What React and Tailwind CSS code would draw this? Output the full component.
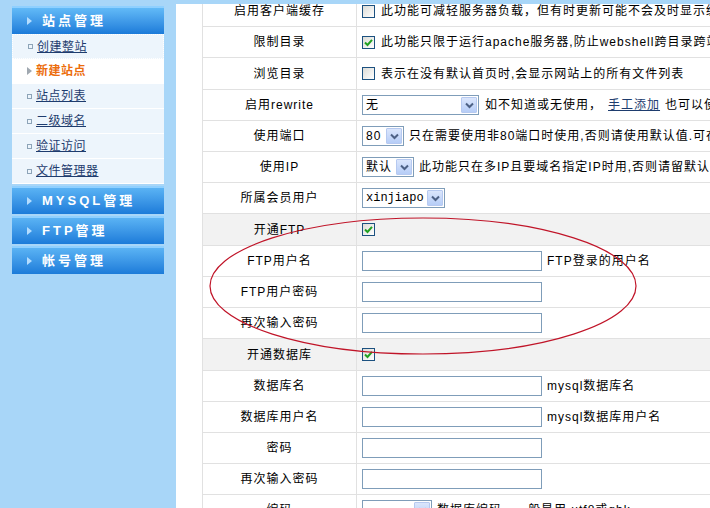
import React from "react";

const F = { fontFamily: '"Liberation Sans", "Noto Sans CJK SC", sans-serif' };

function Checkbox({ checked }) {
  return (
    <span className="inline-flex items-center justify-center w-[13px] h-[13px] border border-[#1c5180] bg-linear-to-br from-[#dcdcd7] to-white shrink-0">
      {checked && (
        <svg width="9" height="9" viewBox="0 0 9 9">
          <path d="M1 4.5 L3.5 7 L8 1.8" stroke="#21a121" strokeWidth="2" fill="none" />
        </svg>
      )}
    </span>
  );
}

function Select({ value, w, mono }) {
  return (
    <span
      className={`inline-flex items-center h-[20px] border border-[#7f9db9] bg-white shrink-0 ${w}`}
    >
      <span
        className={`flex-1 pl-[3px] text-[12px] text-black ${mono ? "tracking-[0px]" : "tracking-[1px]"}`}
        style={mono ? { fontFamily: '"Liberation Mono", "Noto Sans CJK SC", monospace' } : undefined}
      >
        {value}
      </span>
      <span className="w-[16px] h-[16px] mr-[1px] flex items-center justify-center bg-linear-to-b from-[#dbe6fc] to-[#b6cdf7] border border-[#b6c9f0] rounded-[1px]">
        <svg width="9" height="7" viewBox="0 0 9 7">
          <path d="M1 1.5 L4.5 5 L8 1.5" stroke="#4d6185" strokeWidth="2" fill="none" />
        </svg>
      </span>
    </span>
  );
}

function Input() {
  return <span className="inline-block w-[180px] h-[20px] border border-[#7f9db9] bg-white shrink-0" />;
}

function Txt({ children, className = "" }) {
  return <span className={`text-[12px] tracking-[1px] text-black whitespace-nowrap ${className}`}>{children}</span>;
}

const rows = [
  { h: "h-[31px]", label: "启用客户端缓存", v: (<><Checkbox /><Txt className="ml-[6px]">此功能可减轻服务器负载，但有时更新可能不会及时显示缓存</Txt></>) },
  { h: "h-[31px]", label: "限制目录", v: (<><Checkbox checked /><Txt className="ml-[6px]">此功能只限于运行apache服务器,防止webshell跨目录跨站</Txt></>) },
  { h: "h-[32px]", label: "浏览目录", v: (<><Checkbox /><Txt className="ml-[6px]">表示在没有默认首页时,会显示网站上的所有文件列表</Txt></>) },
  { h: "h-[31px]", label: "启用rewrite", v: (<><Select value="无" w="w-[117px]" /><Txt className="ml-[6px]">如不知道或无使用，</Txt><span className="ml-[6px] text-[12px] tracking-[1px] underline text-[#1e3c6e] whitespace-nowrap">手工添加</span><Txt className="ml-[5px]">也可以使用</Txt></>) },
  { h: "h-[31px]", label: "使用端口", v: (<><Select value="80" w="w-[42px]" /><Txt className="ml-[5px]">只在需要使用非80端口时使用,否则请使用默认值.可在</Txt></>) },
  { h: "h-[31px]", label: "使用IP", v: (<><Select value="默认" w="w-[52px]" /><Txt className="ml-[5px]">此功能只在多IP且要域名指定IP时用,否则请留默认</Txt></>) },
  { h: "h-[31px]", label: "所属会员用户", v: (<><Select value="xinjiapo" w="w-[83px]" mono /></>) },
  { h: "h-[32px]", label: "开通FTP", gray: true, v: (<><Checkbox checked /></>) },
  { h: "h-[31px]", label: "FTP用户名", v: (<><Input /><Txt className="ml-[5px]">FTP登录的用户名</Txt></>) },
  { h: "h-[31px]", label: "FTP用户密码", v: (<><Input /></>) },
  { h: "h-[31px]", label: "再次输入密码", v: (<><Input /></>) },
  { h: "h-[32px]", label: "开通数据库", gray: true, v: (<><Checkbox checked /></>) },
  { h: "h-[31px]", label: "数据库名", v: (<><Input /><Txt className="ml-[5px]">mysql数据库名</Txt></>) },
  { h: "h-[31px]", label: "数据库用户名", v: (<><Input /><Txt className="ml-[5px]">mysql数据库用户名</Txt></>) },
  { h: "h-[31px]", label: "密码", v: (<><Input /></>) },
  { h: "h-[31px]", label: "再次输入密码", v: (<><Input /></>) },
  { h: "h-[31px]", label: "编码", v: (<><Select value="" w="w-[70px]" /><Txt className="ml-[5px]">数据库编码，一般是用 utf8或gbk</Txt></>) },
];

function Header({ text, className = "" }) {
  return (
    <div className={`h-[28px] flex items-center pl-[15px] bg-linear-to-b from-[#5ab3f4] to-[#1b7bd9] border-t-2 border-[#8fd0ff] ${className}`}>
      <span className="w-0 h-0 border-y-[4px] border-y-transparent border-l-[5px] border-l-[#b5ddff]" />
      <span className="ml-[10px] text-white font-bold text-[13px] tracking-[3px] whitespace-nowrap">{text}</span>
    </div>
  );
}

function Item({ text, active, focus }) {
  return (
    <div
      className={`h-[25px] flex items-center pl-[15px] border-b border-white ${active ? "bg-white" : "bg-[#edf5fc]"} ${focus ? "border border-dotted border-[#333]" : ""}`}
    >
      {active ? (
        <span className="w-0 h-0 border-y-[4px] border-y-transparent border-l-[5px] border-l-[#a0a8b0]" />
      ) : (
        <span className="w-[5px] h-[5px] border border-[#8da4b8]" />
      )}
      <span
        className={`ml-[4px] text-[12px] tracking-[0.5px] whitespace-nowrap ${active ? "text-[#ec6d0c] font-bold" : "text-[#1e3c6e] underline"}`}
      >
        {text}
      </span>
    </div>
  );
}

export default function App() {
  return (
    <div className="relative w-[710px] h-[508px] overflow-hidden bg-[#a8d6f8] flex" style={F}>
      <div className="w-[176px] shrink-0 pl-[12px] pr-[12px] pt-[6px]">
        <Header text="站点管理" className="border-t-0 from-[#62baf7]" />
        <Item text="创建整站" focus />
        <Item text="新建站点" active />
        <Item text="站点列表" />
        <Item text="二级域名" />
        <Item text="验证访问" />
        <Item text="文件管理器" />
        <Header text="MYSQL管理" className="mt-[2px]" />
        <Header text="FTP管理" className="mt-[2px]" />
        <Header text="帐号管理" className="mt-[2px]" />
      </div>
      <div className="flex-1 mt-[4px] bg-white overflow-hidden pl-[26px]">
        <div className="-mt-[8px] border-l border-[#e1e1e1]">
          {rows.map((r, i) => (
            <div key={i} className={`flex ${r.h} border-b border-[#e1e1e1] ${r.gray ? "bg-[#f2f2f2]" : ""}`}>
              <div className="w-[154px] shrink-0 border-r border-[#e1e1e1] flex items-center justify-center">
                <Txt>{r.label}</Txt>
              </div>
              <div className="flex-1 flex items-center pl-[5px] overflow-hidden">{r.v}</div>
            </div>
          ))}
        </div>
      </div>
      <svg className="absolute left-0 top-0 pointer-events-none" width="710" height="508">
        <ellipse cx="423" cy="286" rx="213" ry="68" fill="none" stroke="#c01428" strokeWidth="1.2" />
      </svg>
    </div>
  );
}
